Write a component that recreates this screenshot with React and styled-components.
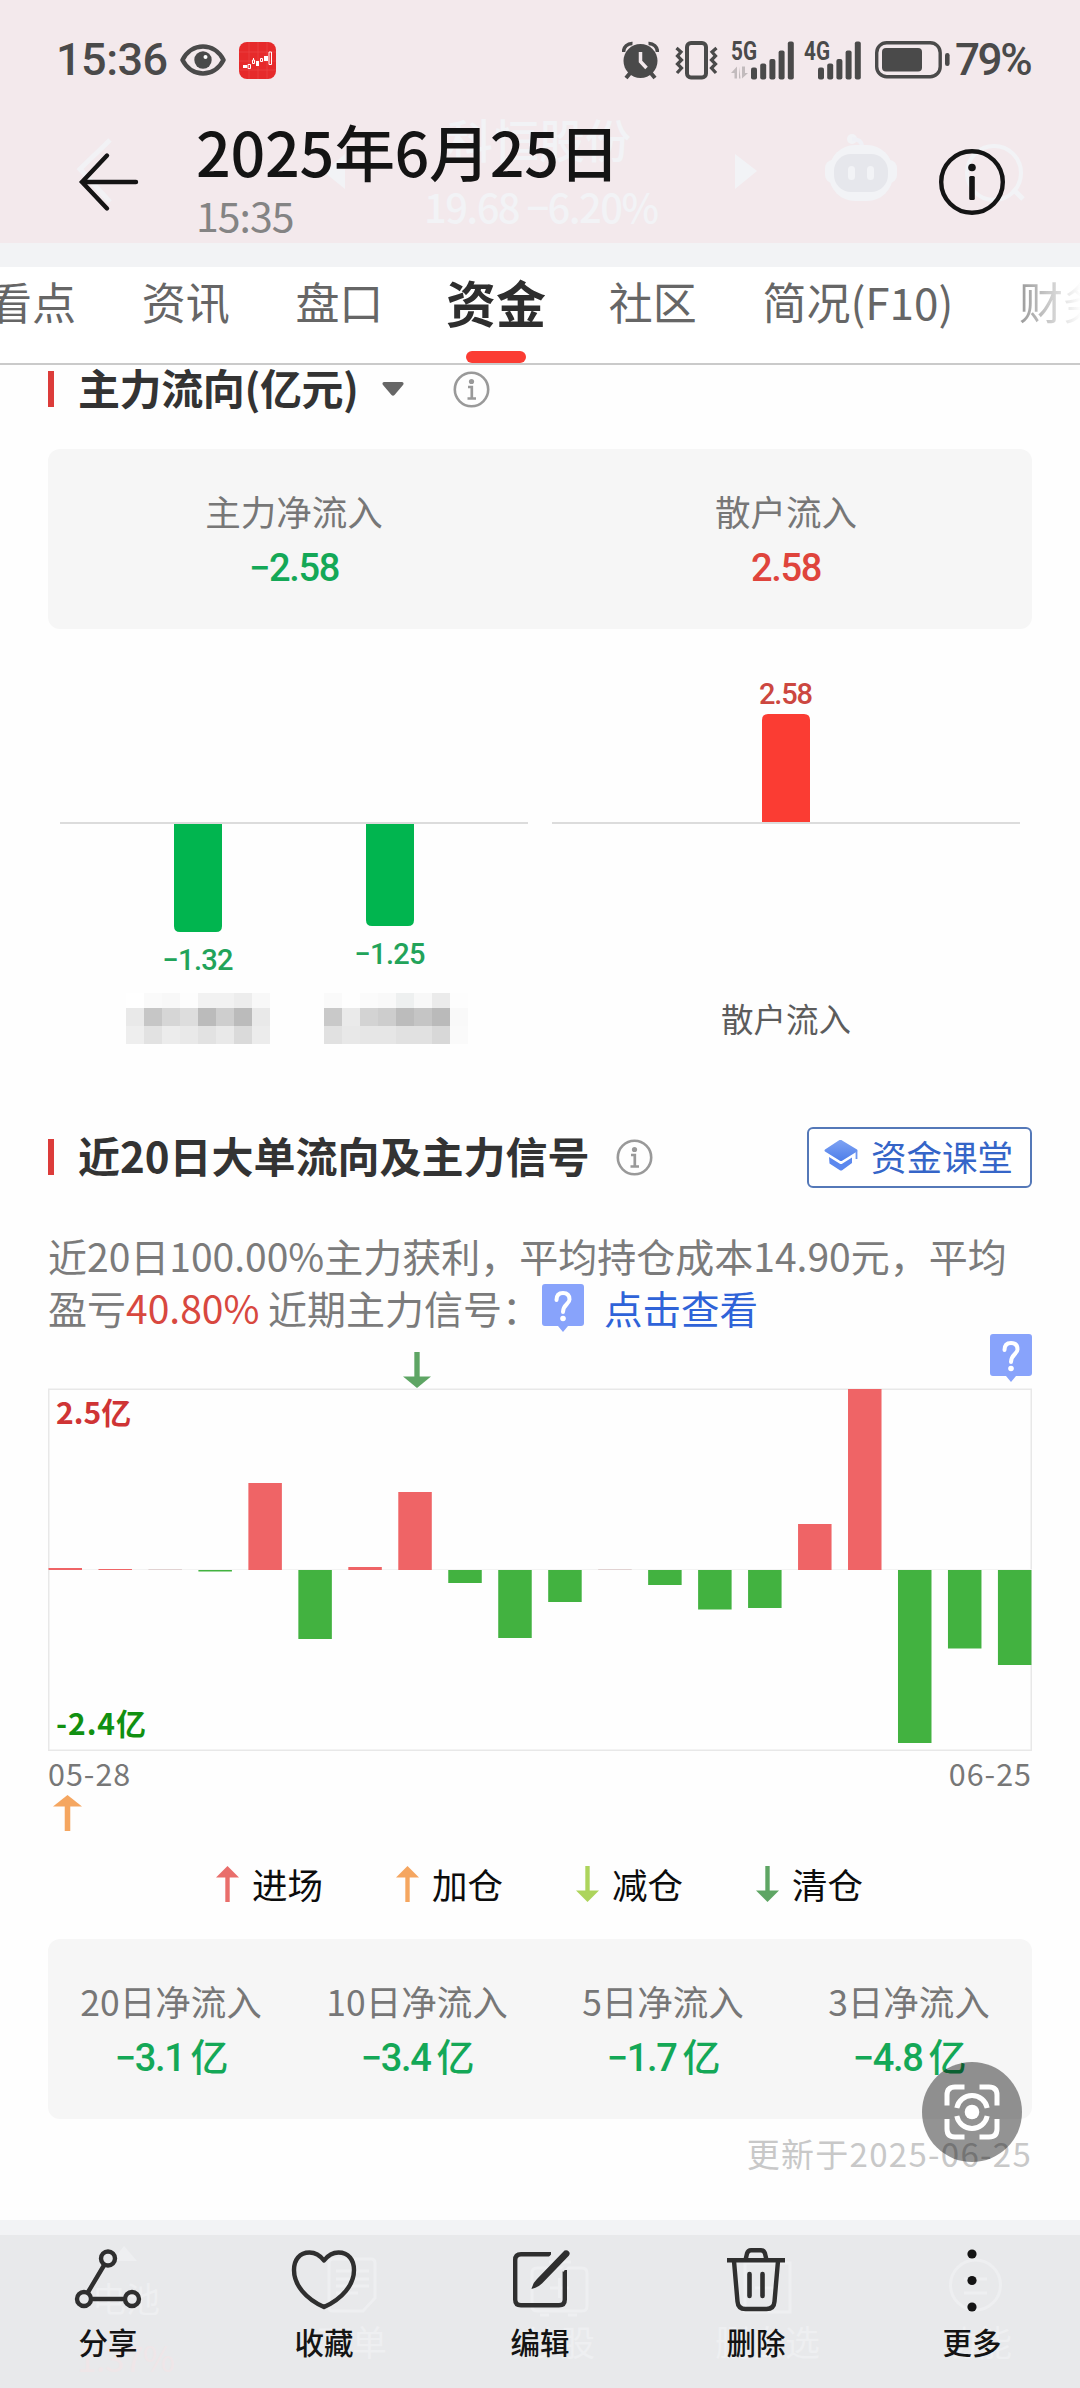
import styled, { createGlobalStyle } from "styled-components";

const GREEN = "#14a857";
const RED = "#df443c";

const netFlow = [
  { label: "主力净流入", value: "−2.58", color: GREEN },
  { label: "散户流入", value: "2.58", color: RED },
];

const sumFlow = [
  { label: "20日净流入", value: "−3.1", unit: "亿", color: GREEN },
  { label: "10日净流入", value: "−3.4", unit: "亿", color: GREEN },
  { label: "5日净流入", value: "−1.7", unit: "亿", color: GREEN },
  { label: "3日净流入", value: "−4.8", unit: "亿", color: GREEN },
];

const tabs = ["看点", "资讯", "盘口", "资金", "社区", "简况(F10)", "财务"];

// bar heights in px, positive goes up
const days = [
  2, 1, 0, -1.5, 87, -69, 3, 78, -13, -68, -32, 0, -15, -39.5, -38, 46, 181,
  -173, -78.5, -95,
];

const signals = [
  { label: "进场", color: "#e96e6b", up: true },
  { label: "加仓", color: "#f5a660", up: true },
  { label: "减仓", color: "#add45c", up: false },
  { label: "清仓", color: "#5ea564", up: false },
];

const mosaic = [
  {
    x: 78,
    rows: [
      ["fff", "fafafa", "f8f8f8", "fdfdfd", "f2f2f2", "f2f2f2", "ededed", "f8f8f8"],
      ["e9e9e9", "c6c6c6", "d6d6d6", "dddddd", "bbbbbb", "cecece", "bbbbbb", "e9e9e9"],
      ["eeeeee", "e2e2e2", "ececec", "e9e9e9", "e2e2e2", "e9e9e9", "dadada", "ececec"],
    ],
  },
  {
    x: 276,
    rows: [
      ["fafafa", "fefefe", "fbfbfb", "f9f9f9", "eef0f0", "f8f8f8", "ebebeb", "fdfdfd"],
      ["c9c9c9", "eaeaea", "d3d3d3", "cdcdcd", "bcbcbc", "c5c5c5", "bababa", "f9f9f9"],
      ["e1e1e1", "e8e8e8", "e6e6e6", "e6e6e6", "e1e1e1", "e1e1e1", "d8d8d8", "fafafa"],
    ],
  },
];

const Eye = () => (
  <svg width="46" height="32" viewBox="0 0 46 32">
    <path
      d="M2.5 16C7 7 15 2.5 23 2.5S39 7 43.5 16C39 25 31 29.5 23 29.5S7 25 2.5 16Z"
      fill="none"
      stroke="#4a4a4a"
      strokeWidth="4.5"
      strokeLinejoin="round"
    />
    <circle cx="23" cy="16" r="8.7" fill="#4a4a4a" />
    <circle cx="25.5" cy="13" r="2" fill="#fff" />
  </svg>
);

const AppBadge = () => (
  <svg width="37" height="37" viewBox="0 0 37 37">
    <rect width="37" height="37" rx="8" fill="#e62a2b" />
    <path d="M0 10H37M0 19H37M0 28H37M10 0V37M19 0V37M28 0V37" stroke="#ec4a4a" strokeWidth=".6" />
    <path d="M4 23h4v3h-4zM17 19h3v5h-3zM25 14h4v5h-4z" fill="#fff" />
    <path
      d="M9 22.5h2.500v4H9zM13.500 18h2v3.500h-2zM14.500 16v2M21.500 16.500h2v3h-2zM30 10h2.500v12.500H30z"
      fill="none"
      stroke="#fff"
      strokeWidth="1"
    />
  </svg>
);

const Alarm = () => (
  <svg width="37" height="39" viewBox="0 0 37 39">
    <path d="M1.500 11A8.500 8.500 0 0 1 10.500 2.500M35.500 11A8.500 8.500 0 0 0 26.500 2.500" fill="none" stroke="#4a4a4a" strokeWidth="3.5" />
    <path d="M9 31L4 37M28 31L33 37" stroke="#4a4a4a" strokeWidth="4" />
    <circle cx="18.5" cy="20" r="17" fill="#4a4a4a" />
    <path d="M18.500 11V20.500L24.500 27" fill="none" stroke="#f3e9ec" strokeWidth="3.5" />
  </svg>
);

const Vibrate = () => (
  <svg width="43" height="39" viewBox="0 0 43 39">
    <rect x="12" y="2" width="19" height="34.5" rx="4" fill="none" stroke="#4a4a4a" strokeWidth="4" />
    <path
      d="M1.500 7L6 11L2.500 15L6.500 19L2.500 23L6.500 27L2 32M41.500 7L37 11L40.500 15L36.500 19L40.500 23L36.500 27L41 32"
      fill="none"
      stroke="#4a4a4a"
      strokeWidth="3.2"
    />
  </svg>
);

const Signal = ({ label, data }) => (
  <SignalBox>
    <svg width="64" height="39" viewBox="0 0 64 39" overflow="visible">
      <text
        x="0"
        y="19"
        fontFamily="Roboto, sans-serif"
        fontSize="25"
        fontWeight="700"
        fill="#4a4a4a"
        textLength="26"
        lengthAdjust="spacingAndGlyphs"
      >
        {label}
      </text>
      {data && <path d="M0 32L6 25.500V37.500H3.500V32ZM8 25.500V37.500H9.500ZM11 25.500V37.500L17 32H14V25.500Z" fill="#c2bbbd" />}
      {[12, 16, 20.5, 29, 38].map((h, i) => (
        <rect key={h} x={(data ? 20 : 14) + i * 9.2} y={38.5 - h} width="6" height={h} rx="2" fill="#4a4a4a" />
      ))}
    </svg>
  </SignalBox>
);

const Battery = () => (
  <svg width="76" height="38" viewBox="0 0 76 38">
    <rect x="1.7" y="1.7" width="63.5" height="34" rx="10" fill="none" stroke="#4a4a4a" strokeWidth="3.4" />
    <rect x="7" y="7" width="40" height="23.5" rx="4" fill="#4a4a4a" />
    <rect x="70" y="12" width="4.6" height="13" rx="2.3" fill="#4a4a4a" />
  </svg>
);

const InfoIcon = () => (
  <svg width="37" height="37" viewBox="0 0 37 37" fill="none" stroke="#999">
    <circle cx="18.5" cy="18.5" r="16.7" strokeWidth="2.6" />
    <path d="M15 16H18.800V27M14.500 27.500H23" strokeWidth="2.7" />
    <circle cx="18.5" cy="10.5" r="2.6" fill="#999" stroke="none" />
  </svg>
);

const Arrow = ({ up, color, width = 23, height = 36 }) => (
  <svg width={width} height={height} viewBox="0 0 23 36" preserveAspectRatio="none">
    <g transform={up ? "" : "rotate(180 11.5 18)"}>
      <path d="M11.500 0L23 11.500H0Z" fill={color} />
      <path d="M11.500 9V36" stroke={color} strokeWidth="4.4" />
    </g>
  </svg>
);

const Question = () => (
  <svg width="42" height="48" viewBox="0 0 42 48">
    <path d="M3 0H39Q42 0 42 3V39Q42 42 39 42H26L21 48L16 42H3Q0 42 0 39V3Q0 0 3 0Z" fill="#88a3fb" />
    <path d="M14.500 16Q14.500 9 21 9T27.500 15.500C27.500 20 21 20.500 21 28" fill="none" stroke="#fff" strokeWidth="4" strokeLinecap="round" />
    <circle cx="21" cy="34.5" r="2.8" fill="#fff" />
  </svg>
);

const Course = () => (
  <svg width="34" height="31" viewBox="0 0 34 31">
    <defs>
      <linearGradient id="cap" x1="0" y1="0" x2="0" y2="1">
        <stop offset="0" stopColor="#7fa3f3" />
        <stop offset="1" stopColor="#4e7eea" />
      </linearGradient>
    </defs>
    <path d="M15.500 0Q17 -.5 18.500 .7L33 9.500Q34 10.500 33 11.500L18.500 20.500Q17 21.500 15.500 20.500L1 11.500Q0 10.500 1 9.500Z" fill="url(#cap)" />
    <path d="M5 17L15.500 23.500Q17 24.500 18.500 23.500L28 17.500V23L18.500 30Q17 31 15.500 30L5.500 23.500Z" fill="#5c88ee" />
    <path d="M32.500 11V19" stroke="#6d95f0" strokeWidth="1.8" />
  </svg>
);

const ShareIcon = () => (
  <svg width="68" height="62" viewBox="0 0 68 62" fill="none" stroke="#2f2f2f" strokeWidth="4.4">
    <circle cx="34" cy="9.5" r="7" />
    <circle cx="10" cy="50" r="7" />
    <circle cx="58" cy="50" r="7" />
    <path d="M30.500 15.500L13.500 44M17 50H51" />
  </svg>
);

const HeartIcon = () => (
  <svg width="68" height="62" viewBox="0 0 68 62" fill="none" stroke="#2f2f2f" strokeWidth="4.4" strokeLinejoin="round">
    <path d="M34 11.500C29 5 24.500 3.500 19.500 3.500C9.500 3.500 4 11 4 21C4 36 16 50 34 58C52 50 64 36 64 21C64 11 58.500 3.500 48.500 3.500C43.500 3.500 39 5 34 11.500Z" />
  </svg>
);

const EditIcon = () => (
  <svg width="68" height="62" viewBox="0 0 68 62" fill="none">
    <path d="M45 5.200H15Q9.200 5.200 9.200 11V50.500Q9.200 56.300 15 56.300H53Q58.800 56.300 58.800 50.500V21" stroke="#2f2f2f" strokeWidth="4.4" />
    <path d="M58.500 1.500Q61 .5 62.800 2.500T62.800 6.700L36 34.500Q32 38.500 25.500 40Q27 33.500 31 30Z" fill="#2f2f2f" />
    <path d="M44 9L50 2M56 22L62 15" stroke="#e8e9eb" strokeWidth="3" />
  </svg>
);

const TrashIcon = () => (
  <svg width="68" height="66" viewBox="0 0 68 66" fill="none" stroke="#2f2f2f" strokeWidth="4.4">
    <path d="M5 13.200H63" />
    <path d="M23.500 13L25 6.500Q26 3.200 29 3.200H39Q42 3.200 43 6.500L44.500 13" />
    <path d="M12 14L15.500 54.500Q16 62 23.500 62H44.500Q52 62 52.500 54.500L56 14" />
    <path d="M27.500 27V49M40.500 27V49" strokeLinecap="round" strokeWidth="4.6" />
  </svg>
);

const MoreIcon = () => (
  <svg width="68" height="66" viewBox="0 0 68 66" fill="#141414">
    <circle cx="34" cy="7" r="4.6" />
    <circle cx="34" cy="33.5" r="4.6" />
    <circle cx="34" cy="60" r="4.6" />
  </svg>
);

const actions = [
  { label: "分享", icon: <ShareIcon /> },
  { label: "收藏", icon: <HeartIcon /> },
  { label: "编辑", icon: <EditIcon /> },
  { label: "删除", icon: <TrashIcon /> },
  { label: "更多", icon: <MoreIcon /> },
];

// page header showing faintly through the viewer bar
const HeaderGhost = () => (
  <Ghost>
    <svg width="1080" height="243" viewBox="0 0 1080 243" fill="#f2f3f6">
      <path d="M110 140L80 169L110 202" fill="none" stroke="#f2f2f5" strokeWidth="5" />
      <path d="M345 154V189L324 172ZM735 154V189L757 171Z" />
      <text x="447" y="158" fontSize="46" fontWeight="500">科恒股份</text>
      <text x="424" y="223" fontSize="40" fontWeight="500" textLength="235">19.68 −6.20%</text>
      <circle cx="852" cy="139" r="5" />
      <path d="M852 139Q862 139 862 147" fill="none" stroke="#f0f1f6" strokeWidth="4" />
      <rect x="825" y="160" width="72" height="23" rx="8" />
      <rect x="829" y="145" width="64" height="56" rx="26" />
      <rect x="834" y="154" width="54" height="38" rx="17" fill="#e6e7ec" />
      <rect x="848" y="166" width="7" height="14" rx="3.5" />
      <rect x="867" y="166" width="7" height="14" rx="3.5" />
      <circle cx="994" cy="173" r="27" fill="none" stroke="#f2f3f6" strokeWidth="4" />
      <path d="M1013 189L1023 199" stroke="#f2f3f6" strokeWidth="5" />
    </svg>
  </Ghost>
);

const FooterGhost = () => (
  <Ghost>
    <svg width="1080" height="153" viewBox="0 0 1080 153" fill="#eeeff1">
      <path d="M112 26L124 11L137 26Z" />
      <text x="92" y="77" fontSize="34">电池</text>
      <text x="77" y="137" fontSize="35" fill="#efe6e8" textLength="98">1.37%</text>
      <text x="317" y="121" fontSize="35">下单</text>
      <text x="525" y="121" fontSize="35">炒股</text>
      <text x="715" y="121" fontSize="35">删自选</text>
      <text x="942" y="121" fontSize="35">功能</text>
      <g fill="none" stroke="#eeeff1" strokeWidth="3">
        <path d="M333 24H371Q375 24 375 28V63L363 76H333Q329 76 329 72V28Q329 24 333 24ZM336 36H369M336 44H369M336 51H369M336 58H358" />
        <path d="M537 33H582Q587 33 587 38V71Q587 76 582 76H537Q532 76 532 71V38Q532 33 537 33ZM549 27H571M550 53H569M559.500 43V63M540 80H549M568 80H577" />
        <path d="M745 28H790V77H745ZM755 53H777" />
        <circle cx="975.5" cy="50" r="25" />
        <path d="M964 44H987M964 58H987" />
      </g>
    </svg>
  </Ghost>
);

const FlowBars = () => (
  <svg width="984" height="390" viewBox="0 0 984 390">
    <rect x="12" y="162" width="468" height="2" fill="#dcdcdc" />
    <rect x="504" y="162" width="468" height="2" fill="#dcdcdc" />
    <path d="M126 164H174V266Q174 272 168 272H132Q126 272 126 266Z" fill="#01b54f" />
    <path d="M318 164H366V260Q366 266 360 266H324Q318 266 318 260Z" fill="#01b54f" />
    <path d="M714 162V60Q714 54 720 54H756Q762 54 762 60V162Z" fill="#fb3c33" />
    <g fontFamily="Roboto, sans-serif" fontSize="29" fontWeight="500" textAnchor="middle">
      <text x="150" y="310" fill="#22a35a" textLength="71">−1.32</text>
      <text x="342" y="304" fill="#22a35a" textLength="71">−1.25</text>
      <text x="738" y="44" fill="#cc4740" textLength="54">2.58</text>
    </g>
    {mosaic.map((m) =>
      m.rows.map((row, r) =>
        row.map((c, i) => (
          <rect key={`${r}-${i}`} x={m.x + i * 18} y={[333, 348, 366][r]} width="18" height={[15, 18, 18][r]} fill={`#${c}`} />
        ))
      )
    )}
    <text x="738" y="371.5" fontSize="32.5" textAnchor="middle" fill="#5c5c5c">散户流入</text>
  </svg>
);

const DayChart = () => (
  <svg width="984" height="364" viewBox="0 0 984 364">
    <rect x=".75" y="1.25" width="982.5" height="361" fill="none" stroke="#e8e8e8" strokeWidth="1.5" />
    <path d="M0 181.500H984" stroke="#f3f3f3" />
    {days.map((h, i) => (
      <rect
        key={i}
        x={0.5 + i * 49.97}
        y={h > 0 ? 182 - h : 182 - (h ? 0 : 1)}
        width="33.5"
        height={Math.abs(h) || 0.8}
        fill={h > 0 ? "#ef6466" : h < 0 ? "#42b240" : "#dccaca"}
      />
    ))}
    <g fontSize="30" fontWeight="700">
      <text x="8" y="36" fill="#cf3435">2.5亿</text>
      <text x="8" y="347" fill="#119011" textLength="90">-2.4亿</text>
    </g>
  </svg>
);

const App = () => (
  <>
    <GlobalStyle />
    <Screen>
      <Header>
        <HeaderGhost />
        <StatusBar>
          <Clock>15:36</Clock>
          <Eye />
          <AppBadge />
          <StatusRight>
            <Alarm />
            <Vibrate />
            <Signal label="5G" data />
            <Signal label="4G" />
            <Battery />
            <Percent>79%</Percent>
          </StatusRight>
        </StatusBar>
        <TitleBar>
          <svg width="62" height="60" viewBox="0 0 62 60" fill="none" stroke="#141414" strokeWidth="4.4" strokeLinecap="round">
            <path d="M29 3.500L4 30L29 56.500M4 30H58" />
          </svg>
          <Titles>
            <Title>2025年6月25日</Title>
            <Time>15:35</Time>
          </Titles>
          <svg width="66" height="66" viewBox="0 0 66 66">
            <circle cx="33" cy="33" r="30.8" fill="none" stroke="#141414" strokeWidth="4.4" />
            <circle cx="33" cy="18.5" r="3.8" fill="#141414" />
            <rect x="30.2" y="27" width="5.6" height="24" rx="1.5" fill="#141414" />
          </svg>
        </TitleBar>
      </Header>

      <Tabs>
        {tabs.map((tab) => (
          <Tab key={tab} $active={tab === "资金"}>
            {tab}
          </Tab>
        ))}
      </Tabs>

      <Content>
        <SectionHead $tight>
          <h2>主力流向(亿元)</h2>
          <Caret width="22" height="14" viewBox="0 0 22 14">
            <path d="M2 0H20Q22.500 .5 21 3L12.500 13Q11 14.500 9.500 13L1 3Q-.5 .5 2 0Z" fill="#666" />
          </Caret>
          <InfoIcon />
        </SectionHead>

        <StatCard $top={42}>
          {netFlow.map((s) => (
            <Stat key={s.label} $color={s.color}>
              <span>{s.label}</span>
              <b>{s.value}</b>
            </Stat>
          ))}
        </StatCard>

        <ChartBox $top={31}>
          <FlowBars />
        </ChartBox>

        <SectionHead $top={89}>
          <h2>近20日大单流向及主力信号</h2>
          <InfoIcon />
          <CourseButton>
            <Course />
            资金课堂
          </CourseButton>
        </SectionHead>

        <Summary>
          近20日100.00%主力获利，平均持仓成本14.90元，平均
          <br />
          盈亏<em>40.80%</em> 近期主力信号：
          <Question />
          <a>点击查看</a>
        </Summary>

        <Markers>
          <Arrow color="#5ea564" width={28} />
          <Question />
        </Markers>
        <DayChart />
        <Dates>
          <span>05-28</span>
          <span>06-25</span>
        </Dates>
        <AddMark>
          <Arrow up color="#f5a660" width={29} />
        </AddMark>

        <Legend>
          {signals.map((s) => (
            <LegendItem key={s.label}>
              <Arrow up={s.up} color={s.color} />
              {s.label}
            </LegendItem>
          ))}
        </Legend>

        <StatCard $top={37}>
          {sumFlow.map((s) => (
            <Stat key={s.label} $color={s.color}>
              <span>{s.label}</span>
              <b>
                {s.value}
                <i>{s.unit}</i>
              </b>
            </Stat>
          ))}
        </StatCard>
        <Updated>更新于2025-06-25</Updated>
        <ScanButton>
          <svg width="56" height="56" viewBox="0 0 56 56" fill="none" stroke="#fff" strokeWidth="5">
            <path d="M3 21.500V11Q3 3 11 3H20.500M35.500 3H45Q53 3 53 11V21.500M53 35V45Q53 53 45 53H35.500M20.500 53H11Q3 53 3 45V35" />
            <path d="M12.800 24A15.500 15.500 0 0 1 43.200 24M12.800 32A15.500 15.500 0 0 0 43.200 32" />
            <circle cx="28" cy="28" r="7.3" fill="#fff" stroke="none" />
          </svg>
        </ScanButton>
      </Content>

      <ActionBar>
        <FooterGhost />
        {actions.map((a) => (
          <Action key={a.label}>
            <div>{a.icon}</div>
            <span>{a.label}</span>
          </Action>
        ))}
      </ActionBar>
    </Screen>
  </>
);

export default App;

const GlobalStyle = createGlobalStyle`
  * {
    box-sizing: border-box;
  }
  body {
    margin: 0;
    background: #fff;
    font-family: "Noto Sans CJK SC", sans-serif;
    color: #333;
  }
  svg {
    display: block;
    flex: none;
  }
`;

const Screen = styled.div`
  width: 1080px;
  height: 2388px;
  display: flex;
  flex-direction: column;
  overflow: hidden;
  background: #fefefe;
`;

const Header = styled.header`
  position: relative;
  height: 267px;
  background: #f3e9ec;
  border-bottom: 24px solid #f2f3f5;
`;

const Ghost = styled.div`
  position: absolute;
  top: 0;
  left: 0;
`;

const StatusBar = styled.div`
  position: relative;
  display: flex;
  align-items: center;
  height: 120px;
  padding: 0 49px 0 56px;

  & > svg:nth-of-type(2) {
    margin-left: 13px;
  }
`;

const Clock = styled.div`
  width: 124px;
  font-family: Roboto, sans-serif;
  font-size: 45px;
  font-weight: 500;
  line-height: 44px;
  letter-spacing: -0.5px;
  color: #4a4a4a;
`;

const StatusRight = styled.div`
  display: flex;
  align-items: center;
  margin-left: auto;

  & > svg:nth-of-type(2) {
    margin-left: 16px;
  }
`;

const SignalBox = styled.div`
  margin-left: 13px;
  width: 64px;

  & + & {
    margin-left: 9px;
  }
  & + svg {
    margin-left: 7px;
  }
`;

const Percent = styled.div`
  width: 76px;
  margin-left: 4px;
  font-family: Roboto, sans-serif;
  font-size: 44px;
  font-weight: 500;
  line-height: 44px;
  letter-spacing: -2.4px;
  white-space: nowrap;
  color: #4a4a4a;
`;

const TitleBar = styled.div`
  position: relative;
  display: flex;
  height: 123px;
  padding: 0 75px 0 78px;

  & > svg {
    margin-top: 32px;
  }
  & > svg:last-child {
    margin-top: 29px;
  }
`;

const Titles = styled.div`
  flex: 1;
  margin: -1px 0 0 56px;
`;

const Title = styled.div`
  font-size: 61px;
  font-weight: 500;
  line-height: 64px;
  letter-spacing: -0.3px;
  color: #141414;
`;

const Time = styled.div`
  margin-top: 11px;
  font-size: 41px;
  line-height: 40px;
  letter-spacing: -1px;
  color: #848484;
`;

const Tabs = styled.nav`
  display: flex;
  gap: 65.7px;
  height: 98px;
  overflow: hidden;
  background: #fff;
  border-bottom: 2px solid #cacaca;
  white-space: nowrap;

  & > :first-child {
    margin-left: -12px;
  }
  & > :last-child {
    background: linear-gradient(90deg, #999, #fff 62px);
    background-clip: text;
    -webkit-background-clip: text;
    color: transparent;
  }
`;

const Tab = styled.div`
  position: relative;
  flex: none;
  height: 96px;
  font-size: ${(p) => (p.$active ? 50 : 44)}px;
  font-weight: ${(p) => (p.$active ? 700 : 400)};
  line-height: 68px;
  color: ${(p) => (p.$active ? "#2e2e2e" : "#666")};
  margin: ${(p) => (p.$active ? "0 -3px" : 0)};

  &::after {
    content: "";
    display: ${(p) => (p.$active ? "block" : "none")};
    position: absolute;
    bottom: 0;
    left: 50%;
    width: 60px;
    height: 12px;
    margin-left: -30px;
    border-radius: 6px;
    background: #fb3c33;
  }
`;

const Content = styled.main`
  position: relative;
  height: 1855px;
  padding: 6px 48px 0;
`;

const SectionHead = styled.div`
  display: flex;
  align-items: center;
  height: 36px;
  margin-top: ${(p) => p.$top || 0}px;
  border-left: 6px solid #dc3c3a;
  padding-left: 24px;

  h2 {
    margin: -5px 0 0;
    font-size: 42px;
    font-weight: 700;
    line-height: 42px;
    letter-spacing: ${(p) => (p.$tight ? "-0.4px" : "normal")};
    color: #333;
    white-space: nowrap;
  }
  h2 + svg {
    margin-left: ${(p) => (p.$tight ? 23 : 26)}px;
  }
`;

const Caret = styled.svg`
  margin-right: 49px;
`;

const CourseButton = styled.button`
  display: flex;
  align-items: center;
  gap: 13px;
  width: 225px;
  height: 61px;
  margin-left: auto;
  padding: 0 0 3px 15px;
  border: 2px solid #5478b8;
  border-radius: 6px;
  background: #fff;
  font-family: inherit;
  font-size: 35.5px;
  color: #3565c8;
  white-space: nowrap;
`;

const StatCard = styled.div`
  display: grid;
  grid-auto-flow: column;
  grid-auto-columns: 1fr;
  height: 180px;
  margin-top: ${(p) => p.$top}px;
  padding-top: 40px;
  border-radius: 12px;
  background: #f6f6f6;
`;

const Stat = styled.div`
  text-align: center;

  span {
    display: block;
    font-size: 35.5px;
    line-height: 44px;
    color: #777;
  }
  b {
    display: block;
    margin-top: 11px;
    font-family: Roboto, "Noto Sans CJK SC", sans-serif;
    font-size: 38px;
    font-weight: 500;
    line-height: 48px;
    letter-spacing: -1.3px;
    color: ${(p) => p.$color};
  }
  i {
    margin-left: 6px;
    font-style: normal;
  }
`;

const ChartBox = styled.div`
  margin-top: ${(p) => p.$top}px;
`;

const Summary = styled.p`
  height: 105px;
  margin: 54px 0 0;
  font-size: 39px;
  line-height: 52px;
  color: #7b7b7b;
  white-space: nowrap;

  em {
    font-style: normal;
    color: #d8483f;
  }
  svg {
    display: inline-block;
    vertical-align: 2px;
    margin: -10px 20px -10px 1px;
  }
  a {
    font-size: 38.5px;
    color: #2f63d8;
  }
`;

const Markers = styled.div`
  display: flex;
  justify-content: space-between;
  height: 54px;

  & > svg:first-child {
    margin: 18px 0 0 355px;
  }
`;

const Dates = styled.div`
  display: flex;
  justify-content: space-between;
  height: 43px;
  font-size: 30.5px;
  line-height: 42px;
  letter-spacing: 1px;
  color: #777;
`;

const AddMark = styled.div`
  padding-left: 5px;
`;

const Legend = styled.div`
  display: flex;
  gap: 72px;
  margin-top: 35px;
  padding-left: 168px;
`;

const LegendItem = styled.div`
  display: flex;
  align-items: center;
  gap: 13px;
  width: 108px;
  height: 36px;
  font-size: 35.5px;
  line-height: 36px;
  color: #0c0c0c;
  white-space: nowrap;
`;

const Updated = styled.div`
  margin-top: 14px;
  font-size: 33px;
  line-height: 40px;
  letter-spacing: 1.3px;
  text-align: right;
  color: #c8c8c8;
`;

const ScanButton = styled.div`
  position: absolute;
  right: 58px;
  bottom: 58px;
  display: grid;
  place-items: center;
  width: 100px;
  height: 100px;
  border-radius: 50%;
  background: rgba(0, 0, 0, 0.42);
`;

const ActionBar = styled.footer`
  position: relative;
  display: grid;
  grid-template-columns: repeat(5, 1fr);
  height: 168px;
  background: #e8e9eb;
  border-top: 15px solid #f2f3f5;
`;

const Action = styled.div`
  position: relative;
  display: flex;
  flex-direction: column;
  align-items: center;

  div {
    display: flex;
    align-items: center;
    height: 66px;
    margin-top: 12px;
  }
  span {
    margin-top: 8px;
    font-size: 29.5px;
    font-weight: 500;
    line-height: 40px;
    color: #141414;
  }
`;
